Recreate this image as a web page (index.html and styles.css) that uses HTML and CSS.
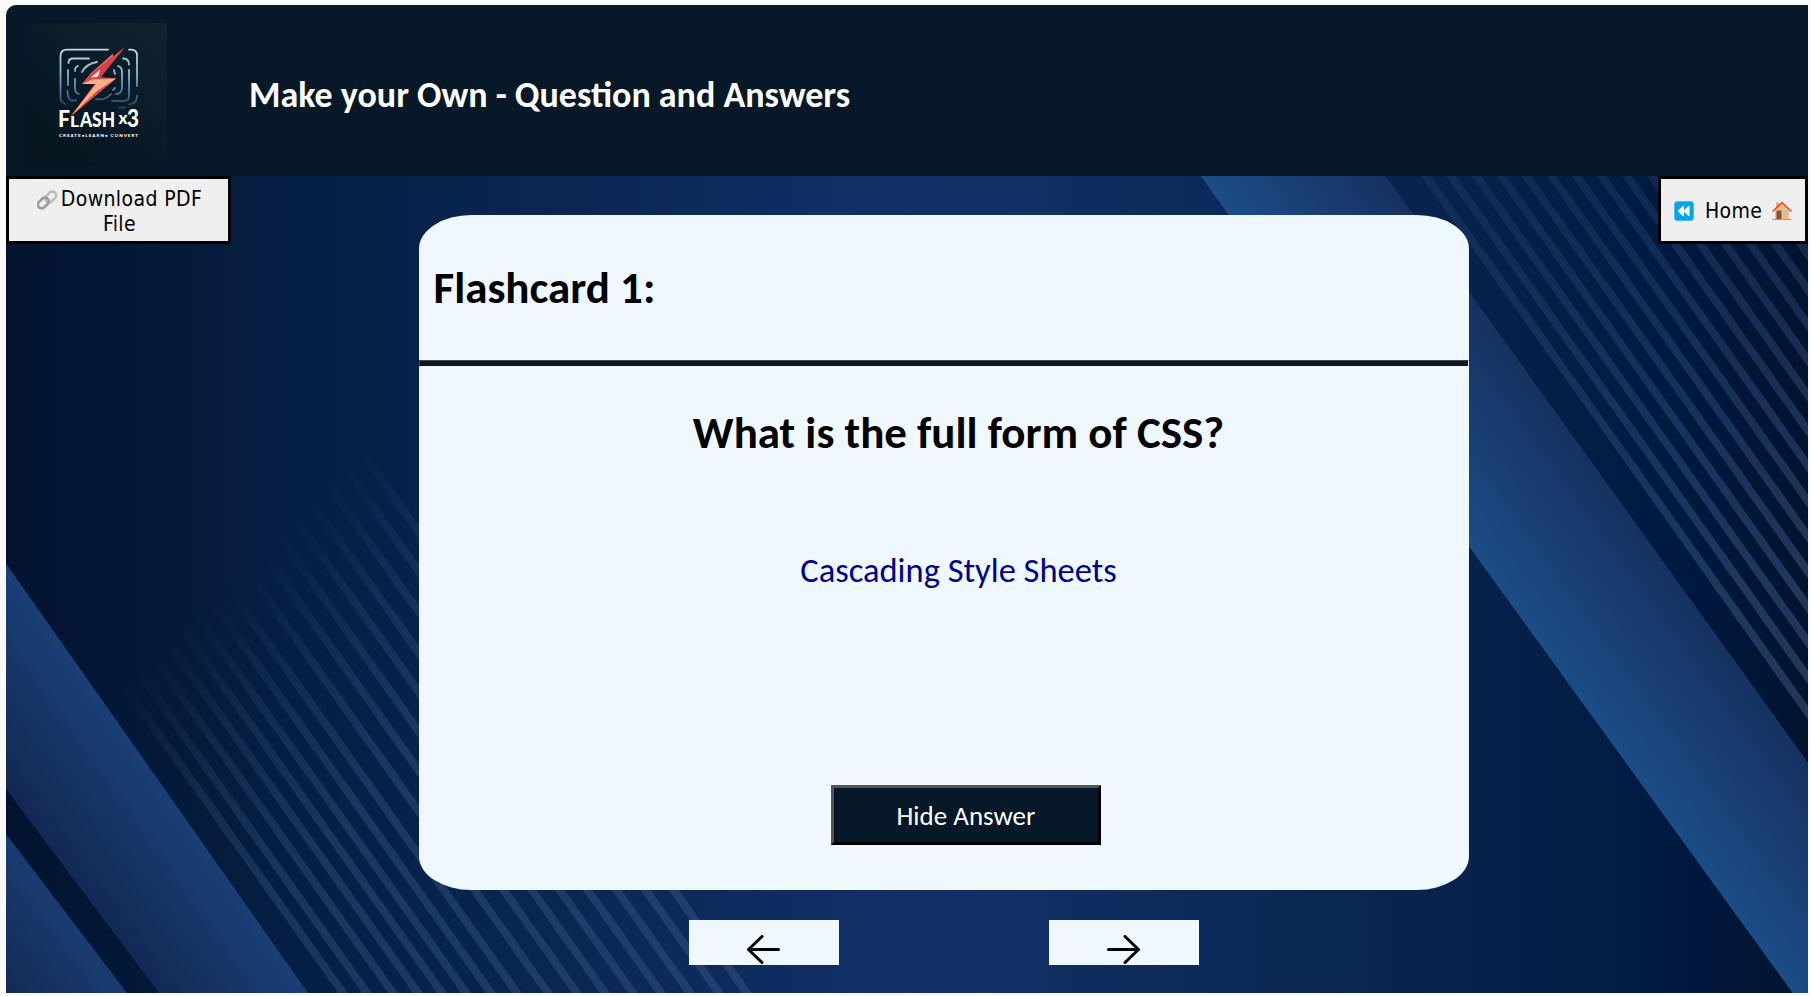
FILE: index.html
```html
<!DOCTYPE html>
<html lang="en">
<head>
<meta charset="utf-8">
<title>Flash x3</title>
<link rel="stylesheet" href="styles.css">
</head>
<body>
<div class="app">
  <header class="header">
    <svg class="logo" viewBox="24 23 143 143">
      <defs>
        <linearGradient id="tile" x1="1" y1="0" x2="0.2" y2="1"><stop offset="0" stop-color="#11232f"/><stop offset=".6" stop-color="#081a27"/><stop offset="1" stop-color="#06151f"/></linearGradient>
        <linearGradient id="ring" gradientUnits="userSpaceOnUse" x1="0" y1="48" x2="0" y2="106"><stop offset="0" stop-color="#c9dce2"/><stop offset=".45" stop-color="#8db4c6"/><stop offset=".8" stop-color="#3c7696"/><stop offset="1" stop-color="#1c4159"/></linearGradient>
      </defs>
      <rect x="24" y="23" width="143" height="143" rx="2" fill="url(#tile)"/>
      <g fill="none" stroke="url(#ring)" stroke-width="1.8" stroke-linecap="round">
        <path d="M108 49.6H67q-6.500 0-6.500 6.500V98q0 4 5 6M129 49.600h2q6 0 6 6V86M137 96q0 8-8 8.500M119 107.500h6"/>
        <path d="M89 58.500H73q-4.500 0-4.500 4.500M68 70V85M67.500 91q0 8 4 9.500H76M123 58.500q6 0 6 6M129 70V96q0 5-5 5H112"/>
        <path d="M78 66q-3 1-3 5M75 79V88q0 5 4 6M82 72Q86 64 97 62M118 66q4 1 4 6V87q0 7-6 7M96 99q9 2 15-5M114 70l1 4M115 88l-2 2"/>
      </g>
      <path d="M113 53.500 91 73 82 84l12-3 19-22z" fill="#ee6a55"/>
      <path d="M125 47 93 72 82 84l14-2L71 116l26-25 19-12.500L101 77z" fill="#d2434a"/>
      <path d="M82 84 92 79.500 116 78.500 71 116 96 84z" fill="#ffae88"/>
      <path d="M116 78.500 71 116 97 91z" fill="#d2434a"/>
      <path d="M91 77.500 123 49.500 97 77z" fill="#fff1e8"/>
      <path d="M125 47 100 69 98 78z" fill="#d2434a"/>
      <g fill="#fff" class="logo-text">
        <text x="58" y="127" font-size="23" textLength="12" lengthAdjust="spacingAndGlyphs">F</text>
        <text x="70" y="127" font-size="15" textLength="9" lengthAdjust="spacingAndGlyphs">L</text>
        <text x="80" y="126.500" font-size="20" textLength="35" lengthAdjust="spacingAndGlyphs">ASH</text>
        <text x="118.500" y="124" font-size="17" textLength="9" lengthAdjust="spacingAndGlyphs">x</text>
        <text x="127" y="127" font-size="24" textLength="12" lengthAdjust="spacingAndGlyphs">3</text>
        <text x="59" y="136.500" font-size="4.500" textLength="79" lengthAdjust="spacing">CREATE•LEARN• CONVERT</text>
      </g>
    </svg>
    <h1 class="title">Make your Own - Question and Answers</h1>
  </header>

  <main class="stage">
    <svg class="backdrop" viewBox="6 176 1802 817" preserveAspectRatio="none">
      <defs>
        <linearGradient id="bg"><stop offset="0" stop-color="#03132f"/><stop offset=".06" stop-color="#031836"/><stop offset=".12" stop-color="#051c3e"/><stop offset=".23" stop-color="#07234b"/><stop offset=".5" stop-color="#113067"/><stop offset=".63" stop-color="#0e2d5d"/><stop offset=".81" stop-color="#07224b"/><stop offset=".92" stop-color="#011a41"/><stop offset="1" stop-color="#021330"/></linearGradient>
        <linearGradient id="bandR" gradientUnits="userSpaceOnUse" x1="1340" y1="368" x2="1473" y2="272"><stop offset="0" stop-color="#1b4d86"/><stop offset=".5" stop-color="#193d72"/><stop offset="1" stop-color="#152f5d"/></linearGradient>
        <linearGradient id="bandL" gradientUnits="userSpaceOnUse" x1="159" y1="780" x2="52" y2="856"><stop offset="0" stop-color="#193f75"/><stop offset="1" stop-color="#132852"/></linearGradient>
        <linearGradient id="bandL2" gradientUnits="userSpaceOnUse" x1="66" y1="913" x2="-8" y2="970"><stop offset="0" stop-color="#193c70"/><stop offset="1" stop-color="#142a56"/></linearGradient>
        <linearGradient id="lineL" gradientUnits="userSpaceOnUse" x1="239" y1="566" x2="419" y2="748"><stop offset="0" stop-color="#6284b4" stop-opacity="0"/><stop offset=".5" stop-color="#6284b4" stop-opacity=".14"/><stop offset="1" stop-color="#6284b4" stop-opacity=".22"/></linearGradient>
        <linearGradient id="lineR" gradientUnits="userSpaceOnUse" x1="1500" y1="176" x2="1760" y2="600"><stop offset="0" stop-color="#445088" stop-opacity=".2"/><stop offset=".45" stop-color="#506aa8" stop-opacity=".25"/><stop offset="1" stop-color="#6080b4" stop-opacity=".32"/></linearGradient>
      </defs>
      <rect x="6" y="176" width="1802" height="817" fill="url(#bg)"/>
      <path d="M1200.700 176H1385.700L1808 762.700V993h-15.300z" fill="url(#bandR)"/>
      <path d="M6 563.400 308 993H159L6 789z" fill="url(#bandL)"/>
      <path d="M6 834 127 993H6z" fill="url(#bandL2)"/>
      <g id="lines-left" stroke="url(#lineL)" stroke-width="8"/>
      <g id="lines-right" stroke="url(#lineR)" stroke-width="8"/>
    </svg>

    <button class="box download"><svg class="emoji link" viewBox="0 0 20 20"><g fill="none" stroke-width="2.600"><rect x="7.700" y="3.200" width="12" height="7.600" rx="3.800" transform="rotate(-45 13.700 7)" stroke="#bebebe"/><rect x="0.300" y="9.200" width="12" height="7.600" rx="3.800" transform="rotate(-45 6.300 13)" stroke="#9b9b9b"/></g></svg>Download PDF File</button>

    <section class="center">
      <article class="card">
        <h2 class="card-name">Flashcard 1:</h2>
        <hr class="rule">
        <p class="question">What is the full form of CSS?</p>
        <p class="answer">Cascading Style Sheets</p>
        <button class="toggle">Hide Answer</button>
      </article>
      <nav class="pager">
        <button class="page"><svg width="34" height="30" viewBox="0 0 34 30"><path d="M31.500 14.500H1.500M15 1.500 1.500 14.500 15 27.500"/></svg></button>
        <button class="page"><svg width="34" height="30" viewBox="0 0 34 30"><path d="M1.500 14.500H31.500M18 1.500 31.500 14.500 18 27.500"/></svg></button>
      </nav>
    </section>

    <button class="box home">
      <svg class="emoji" viewBox="0 0 20 20"><rect x=".5" y=".5" width="19" height="19" rx="2.500" fill="#00a6ed" stroke="#4fbdf0"/><path d="M9.500 5v10L4 10zM15 5v10l-5.500-5z" fill="#fff" stroke="#fff" stroke-linejoin="round"/></svg>
      <span class="label">Home</span>
      <svg class="emoji" viewBox="0 0 20 20"><path d="M4 1.500h3v6H4z" fill="#e0ad6c"/><path d="M3 9 10 2l7 7v9H3z" fill="#f3c07b"/><path d="M4.500 9.500h5V18h-5z" fill="#8a5040"/><path d="M11.500 9.500H16v4h-4.500z" fill="#8fcbf7"/><path d="M1 10 10 1.500 19 10" fill="none" stroke="#f8403a" stroke-width="1.600" stroke-linecap="round"/><path d="M.5 18.500h19" stroke="#2fd47f" stroke-width="1.200"/></svg>
    </button>
  </main>
</div>
<script src="lines.js"></script>
</body>
</html>
```
FILE: styles.css
```css
* { box-sizing: border-box; }
body { margin: 0; background: #fafafa; font-family: Carlito, Calibri, Lato, sans-serif; overflow: hidden; }
.app { width: 1802px; height: 988px; margin: 5px 0 0 6px; overflow: hidden; border-top-left-radius: 10px; }
.header { display: flex; align-items: center; height: 171px; padding-left: 18px; background: #071828; }
.logo { width: 143px; height: 143px; margin-top: 8px; flex: none; }
.logo-text { font-family: Lato, sans-serif; font-weight: 900; }
.title { margin: 8px 0 0 82px; color: #fff; font-size: 36px; line-height: 44px; font-weight: 700; white-space: nowrap; }
.stage { position: relative; display: flex; justify-content: space-between; align-items: flex-start; height: 817px; }
.backdrop { position: absolute; inset: 0; width: 100%; height: 100%; z-index: -1; }
.box { height: 68px; border: 3px solid #000; background: #efefef; color: #000; padding: 3px 0 0; font: 21px/25px "DejaVu Sans Condensed", "DejaVu Sans", sans-serif; font-stretch: condensed; letter-spacing: .4px; }
.emoji { width: 20px; height: 20px; flex: none; }
.link { margin-right: 4px; vertical-align: -4px; }
.download { width: 225px; padding: 3px 25px 0 27px; }
.home { display: flex; align-items: center; width: 150px; padding: 2px 0 0 13px; }
.label { width: 67px; margin-left: 11px; text-align: left; }
.center { width: 1050px; margin: 39px 0 0 -2px; }
.card { display: flex; flex-direction: column; align-items: center; height: 675px; border-radius: 5%; background: #f0f8ff; }
.card-name { align-self: flex-start; margin: 47px 0 0 15px; font-size: 45px; line-height: 52px; }
.rule { width: 100%; height: 7px; margin: 46px 0 0; background: #071828; border: 1px inset #9a9a9a; border-bottom-color: #eee; border-right-color: #eee; }
.question { margin: 40px 0 0 30px; font-size: 45px; line-height: 52px; font-weight: 700; white-space: nowrap; }
.answer { margin: 89px 0 0 30px; font-size: 34.500px; line-height: 44px; color: #00008b; }
.toggle { width: 270px; height: 60px; margin: 193px 0 0 44px; padding: 1px 0 0 1px; border: 3px outset #000; background: #071828; color: #fff; font: 27px/34px Carlito, Calibri, Lato, sans-serif; }
.pager { display: flex; justify-content: space-between; margin: 30px 270px 0; }
.page { display: flex; align-items: flex-end; justify-content: center; width: 150px; height: 45px; padding: 0; border: 0; background: #f0f8ff; }
.page path { fill: none; stroke: #000; stroke-width: 3; stroke-linecap: round; stroke-linejoin: round; }
```
FILE: lines.js
```js
const SLOPE = 1.405;
function line(group, x1, y1, x2, y2) {
  const el = document.createElementNS("http://www.w3.org/2000/svg", "line");
  Object.entries({ x1, y1, x2, y2 }).forEach(([k, v]) => el.setAttribute(k, v));
  document.getElementById(group).appendChild(el);
}
// x of each left stripe where it leaves the bottom edge
[343, 367, 393, 418, 442, 466, 491, 517, 548, 577, 605, 633, 661, 690, 719, 747].forEach((x, i) => {
  const sx = 110 + i * 16;
  line("lines-left", sx, 993 - (x - sx) * SLOPE, x + 10, 993 + 10 * SLOPE);
});
for (let i = 0; i < 16; i++) {
  const x = 1426 + i * 25.1;
  line("lines-right", x - 20, 176 - 20 * SLOPE, x + 420, 176 + 420 * SLOPE);
}
```
